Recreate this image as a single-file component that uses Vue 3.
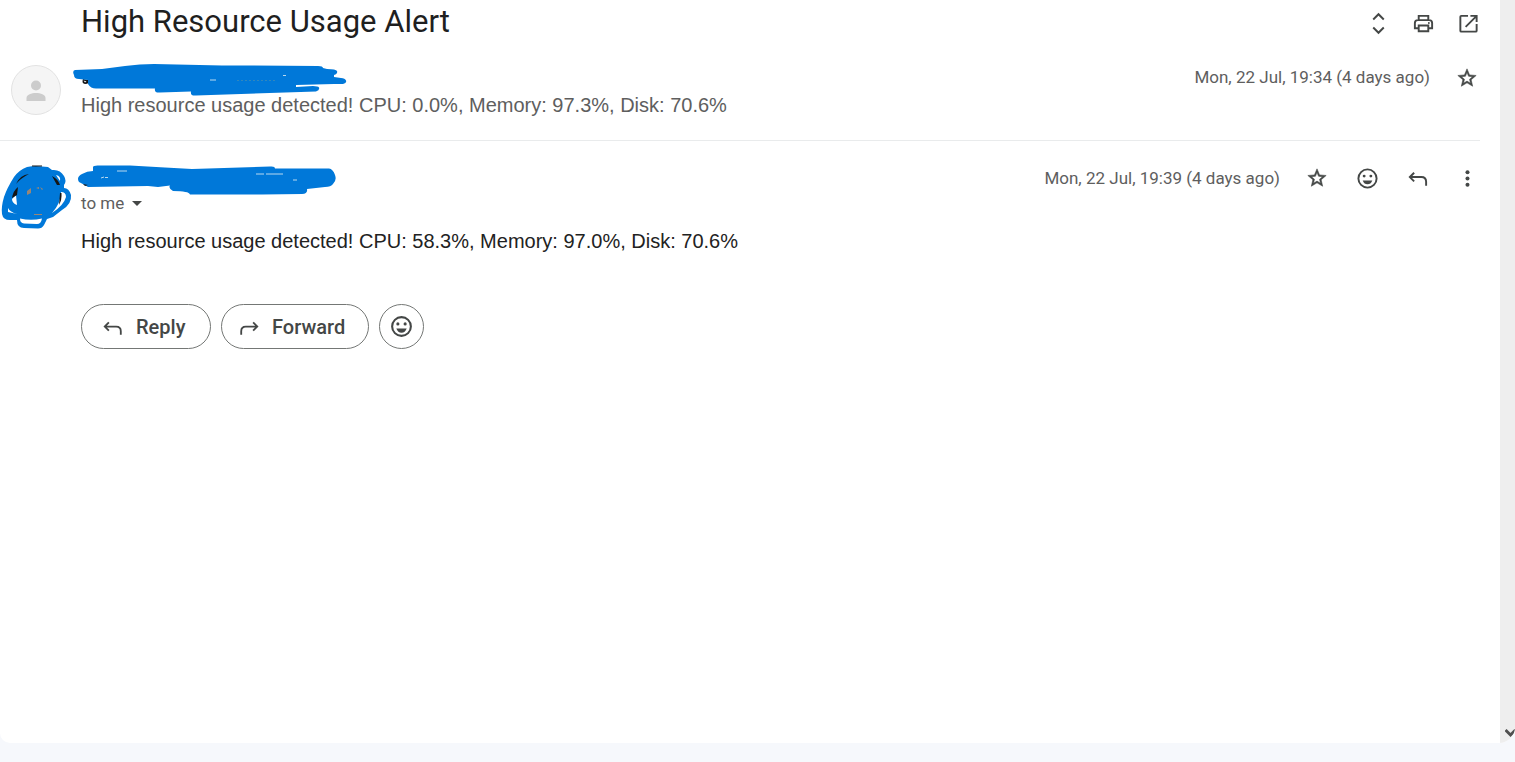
<script setup>
const starPath =
  'M22 9.24l-7.19-.62L12 2 9.19 8.63 2 9.24l5.46 4.73L5.82 21 12 17.27 18.18 21l-1.63-7.03L22 9.24zM12 15.4l-3.76 2.27 1-4.28-3.32-2.88 4.38-.38L12 6.1l1.71 4.04 4.38.38-3.32 2.88 1 4.28L12 15.4z'
</script>

<template>
  <div class="page">
    <div class="panel">
      <main class="thread">
        <header class="subject">
          <h1>High Resource Usage Alert</h1>
          <div class="tools">
            <button type="button" aria-label="Expand all">
              <svg viewBox="0 0 24 24"><path class="line" d="M6.500 7.800l5.500-5.500 5.500 5.500M6.500 16.200l5.500 5.500 5.500-5.500" /></svg>
            </button>
            <button type="button" aria-label="Print all">
              <svg viewBox="0 0 24 24">
                <path class="line" d="M7 8V4h10v4M7 17H3v-5.500q0-3 3-3h12q3 0 3 3V17h-4M7 14h10v6H7z" />
                <circle cx="17.600" cy="11.500" r="1" />
              </svg>
            </button>
            <button type="button" aria-label="Open in new window">
              <svg viewBox="0 0 24 24"><path class="line" d="M11.500 4H4.500Q3.500 4 3.500 5v14.500q0 1 1 1h15q1 0 1-1v-7M14 4h6.500v6.500M20 4.500L9 15.500" /></svg>
            </button>
          </div>
        </header>

        <article class="message first">
          <div class="avatar">
            <svg class="person" viewBox="0 0 50 50">
              <circle class="disc" cx="25" cy="25" r="24.500" />
              <circle class="figure" cx="25" cy="20.500" r="5" />
              <path class="figure" d="M15.500 36v-3c0-3.500 5-5 9.500-5s9.500 1.500 9.500 5v3z" />
            </svg>
          </div>
          <div class="content">
            <div class="meta">
              <div class="sender">
                <svg class="redaction" viewBox="70 60 280 40">
                  <path class="dark" d="M83 79q-2 5 3 5l3-1-1-3z" />
                  <path class="ink" d="M75 70Q72 71 74 75Q74 79 79 79L88 80L88 84Q91 89 97 88.500L155 88.500Q154 93 160 92.500L191 91.500Q190 96 196 95.500L316 91.500Q320 90 319 87.500Q318 86 313 86L296 87L296 85L334 84L343 84Q347 83 346 80.500Q345 78 341 78L334 77L334 75Q338 74 337 71Q336 69 327 69L323 68Q323 66 318 66L252 65.500L222 65.500L154 64Q140 64 125 66L102 69Z" />
                  <path class="paper" d="M83.500 80.500l3 1-1.500 1z" />
                  <path class="glint" d="M210 80h6" />
                  <path class="glint" d="M283 75.500h3" />
                  <path class="faint" d="M237 80.500h39" />
                </svg>
              </div>
              <time>Mon, 22 Jul, 19:34 (4 days ago)</time>
              <div class="actions">
                <button type="button" aria-label="Star"><svg class="star" viewBox="0 0 24 24"><path :d="starPath" /></svg></button>
              </div>
            </div>
            <p class="snippet">High resource usage detected! CPU: 0.0%, Memory: 97.3%, Disk: 70.6%</p>
          </div>
        </article>

        <article class="message second">
          <div class="avatar">
            <svg class="scribble" viewBox="0 0 76 72">
              <path class="ink" d="M27 7Q32 6 36 6L48 7L52 10Q60 9 64 16Q67 21 64 25L64 28Q69 28 71 35Q72 44 62 50L53 57L47 59L44 65Q42 68.500 38 68.500L24 68Q17 68 17 60L10 60Q3 60 2 54Q1 47 4 37Q7 28 14 17Q19 10 27 7Z" />
              <path class="paper" d="M20 58.500Q31 61 42 58.500Q41 64 37 64L24 63.500Q20 63 20 58.500ZM61 32Q66 32 66 37Q64 45 52 53Q61 43 61 32ZM12 39L16 35L17 45Q12 43 12 39ZM8 48Q10 52 17 54L8 52ZM56 15Q61 16 60 21Z" />
              <path class="dark" d="M16 24Q20 15 29 14Q21 18 16 24ZM12 38Q13 31 18 27L17 35ZM52 16Q58 19 60 25L57 25ZM60 33L61.500 33Q62 40 59 45ZM32 5.500L42 5.500L42 6.500L32 6.500Z" />
              <path class="fleck" d="M27 31l4-3v5l-4 2zM36 28l3-1v2zM40 27l3 2-1 1zM34 54h8v1h-8z" />
            </svg>
          </div>
          <div class="content">
            <div class="meta">
              <div class="sender">
                <svg class="redaction" viewBox="70 160 280 40">
                  <path class="ink" d="M93 167Q93 165 100 165.500L130 165.500Q160 167 192 169L270 166.500Q275 166 275 168.500L329 168.500Q333 169 335 175Q337 180 333 184Q331 187 325 187L307 189Q308 194 302 194L262 194.500L190 194.500Q189 191 173 191Q168 188 170 185.500L158 187L148 186L88 187Q85 185 79 182Q76 177 82 174Q87 171 93 171Z" />
                  <path class="glint" d="M101 178l3-1M105 177.500h3M293 180h4" />
                  <path class="glint" d="M117 171h10M256 174h8M266 174h17" />
                  <path class="dark" d="M83 184l5 1-3 1z" />
                </svg>
              </div>
              <time>Mon, 22 Jul, 19:39 (4 days ago)</time>
              <div class="actions">
                <button type="button" aria-label="Star"><svg class="star" viewBox="0 0 24 24"><path :d="starPath" /></svg></button>
                <button type="button" aria-label="Add reaction">
                  <svg viewBox="0 0 24 24">
                    <circle class="line" cx="12" cy="12" r="9.500" />
                    <circle cx="8.500" cy="9.500" r="1.500" /><circle cx="15.500" cy="9.500" r="1.500" />
                    <path d="M7 14h10q-1.500 4-5 4t-5-4z" />
                  </svg>
                </button>
                <button type="button" aria-label="Reply">
                  <svg viewBox="0 0 24 24"><path class="line" d="M8.500 6L4 10.500l4.500 4.500M4.500 10.500h11.500q5 0 5 5v4" /></svg>
                </button>
                <button type="button" aria-label="More">
                  <svg viewBox="0 0 24 24"><circle cx="12" cy="5.500" r="2.100" /><circle cx="12" cy="12" r="2.100" /><circle cx="12" cy="18.500" r="2.100" /></svg>
                </button>
              </div>
            </div>
            <button class="recipient" type="button">
              to me
              <svg viewBox="0 0 10 5"><path d="M0 0h10L5 5z" /></svg>
            </button>
            <p class="body">High resource usage detected! CPU: 58.3%, Memory: 97.0%, Disk: 70.6%</p>
            <div class="replies">
              <button class="pill reply" type="button">
                <svg viewBox="0 0 24 24"><path class="line" d="M7.500 7L3 11.500 7.500 16M3.500 11.500h12q5 0 5 5v4" /></svg>
                Reply
              </button>
              <button class="pill forward" type="button">
                <svg viewBox="0 0 24 24"><path class="line" d="M16.500 7L21 11.500 16.500 16M20.500 11.500h-12q-5 0-5 5v4" /></svg>
                Forward
              </button>
              <button class="pill round" type="button" aria-label="Add reaction">
                <svg viewBox="0 0 24 24">
                  <circle class="line" cx="12" cy="12" r="9" />
                  <circle cx="8.500" cy="9.500" r="1.500" /><circle cx="15.500" cy="9.500" r="1.500" />
                  <path d="M7 14h10q-1.500 4-5 4t-5-4z" />
                </svg>
              </button>
            </div>
          </div>
        </article>
      </main>
      <div class="scrollbar">
        <svg viewBox="0 0 10 10"><path d="M0.500 2l5 5 5-5" /></svg>
      </div>
    </div>
  </div>
</template>

<style>
body {
  margin: 0;
}
</style>

<style scoped>
.page {
  display: flex;
  min-height: 100vh;
  box-sizing: border-box;
  padding-bottom: 19px;
  background: #f6f8fc;
  color: #1f1f1f;
  font-family: Roboto, sans-serif;
}
.panel {
  display: flex;
  flex: 1;
  overflow: hidden;
  border-radius: 0 0 16px 10px;
  background: #fff;
}
.thread {
  flex: 1;
  min-width: 0;
}
h1,
p {
  margin: 0;
  font-weight: 400;
}
button {
  display: flex;
  align-items: center;
  justify-content: center;
  padding: 0;
  border: 0;
  background: none;
  color: #444746;
  font-family: inherit;
}
button svg {
  width: 24px;
  height: 24px;
  fill: #444746;
}
.line {
  fill: none;
  stroke: #444746;
  stroke-width: 2;
}
.star {
  stroke: #444746;
  stroke-width: 0.6;
}
.subject {
  display: flex;
  align-items: center;
  justify-content: space-between;
  height: 47px;
  padding: 0 9px 0 81px;
}
h1 {
  align-self: flex-start;
  font-size: 31px;
  line-height: 44px;
}
.tools {
  display: flex;
}
.tools button {
  width: 45px;
  height: 45px;
}
.tools svg {
  width: 23px;
  height: 23px;
}
.message {
  display: flex;
  padding-top: 18px;
}
.first {
  margin-right: 20px;
  padding-bottom: 21px;
  border-bottom: 1px solid #e9ebec;
}
.avatar {
  position: relative;
  flex: 0 0 81px;
}
.person {
  display: block;
  width: 50px;
  height: 50px;
  margin-left: 11px;
}
.disc {
  fill: #f5f5f5;
  stroke: #e2e2e2;
}
.figure {
  fill: #ccc;
}
.scribble {
  position: absolute;
  top: 1px;
  left: 0;
  width: 76px;
  height: 72px;
}
.content {
  flex: 1;
  min-width: 0;
}
.meta {
  display: flex;
  align-items: center;
  height: 26px;
  padding-right: 8px;
}
.first .meta {
  margin-right: -20px;
}
.second .meta {
  height: 26px;
  padding-top: 6px;
}
.sender {
  position: relative;
  flex: 1;
  height: 26px;
}
.redaction {
  position: absolute;
  top: -5px;
  left: -11px;
  width: 280px;
  height: 40px;
}
time {
  color: #5e5e5e;
  font-size: 17px;
  line-height: 26px;
}
.first time {
  line-height: 24px;
  margin-bottom: 2px;
}
.actions {
  display: flex;
  margin-left: 12px;
}
.actions button {
  width: 50px;
  height: 26px;
}
.actions svg {
  width: 23px;
  height: 23px;
}
.actions .star {
  width: 22px;
  height: 22px;
}
.snippet,
.body {
  font-family: "Liberation Sans", Arial, sans-serif;
  font-size: 20px;
  line-height: 28px;
}
.snippet {
  color: #5e5e5e;
}
.body {
  margin-top: 12px;
  color: #222;
}
.recipient {
  gap: 8px;
  height: 24px;
  color: #5e5e5e;
  font-size: 17px;
}
.recipient svg {
  width: 10px;
  height: 5px;
}
.replies {
  display: flex;
  gap: 10px;
  margin-top: 49px;
}
.pill {
  box-sizing: border-box;
  gap: 12px;
  height: 45px;
  border: 1px solid #747775;
  border-radius: 23px;
  font-size: 20px;
  font-weight: 500;
}
.pill svg {
  width: 22px;
  height: 22px;
}
.reply {
  justify-content: flex-start;
  width: 130px;
  padding-left: 20px;
}
.forward {
  justify-content: flex-start;
  width: 148px;
  padding-left: 16px;
}
.round {
  width: 45px;
}
.round svg {
  width: 25px;
  height: 25px;
}
.ink {
  fill: #0078d9;
}
.dark {
  fill: #151515;
}
.paper {
  fill: #fff;
}
.fleck {
  fill: #998675;
}
.glint,
.faint {
  fill: none;
  stroke: #b9d9ef;
  stroke-width: 1;
}
.faint {
  stroke: #3187bd;
  stroke-dasharray: 2 2;
}
.scrollbar {
  display: flex;
  align-items: flex-end;
  justify-content: flex-end;
  width: 15px;
  background: #eee;
}
.scrollbar svg {
  flex: none;
  width: 10px;
  height: 10px;
  margin-bottom: 5px;
  fill: none;
  stroke: #505050;
  stroke-width: 3;
}
</style>
